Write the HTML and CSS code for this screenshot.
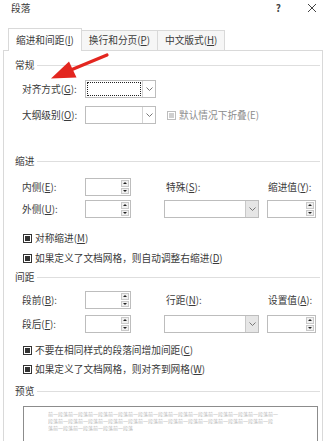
FILE: index.html
```html
<!DOCTYPE html>
<html lang="zh-CN">
<head>
<meta charset="utf-8">
<title>段落</title>
<link rel="stylesheet" href="styles.css">
</head>
<body>
<div class="titlebar">
  <span class="title">段落</span>
  <span class="help">?</span>
  <span class="close"><svg width="10" height="10" viewBox="0 0 10 10"><path d="M1 1L9 9M9 1L1 9" stroke="#444" stroke-width="1" fill="none"/></svg></span>
</div>
<div class="tabs">
  <div class="tab active">缩进和间距(<u>I</u>)</div>
  <div class="tab">换行和分页(<u>P</u>)</div>
  <div class="tab">中文版式(<u>H</u>)</div>
</div>
<div class="panel">
  <div class="group-head gh-general"><span>常规</span><i></i></div>
  <div class="row row-align">
    <span class="lbl">对齐方式(<u>G</u>):</span>
    <div class="combo combo-short focus"><span class="val"><span class="dots"></span></span><span class="btn"><svg width="7" height="4" viewBox="0 0 7 4"><path d="M0.5 0.5L3.5 3.5L6.5 0.5" stroke="#777" fill="none"/></svg></span></div>
  </div>
  <div class="row row-outline">
    <span class="lbl">大纲级别(<u>O</u>):</span>
    <div class="combo combo-short"><span class="val"></span><span class="btn"><svg width="7" height="4" viewBox="0 0 7 4"><path d="M0.5 0.5L3.5 3.5L6.5 0.5" stroke="#777" fill="none"/></svg></span></div>
    <span class="check disabled span2"><span class="cb"></span>默认情况下折叠(E)</span>
  </div>

  <div class="group-head gh-indent"><span>缩进</span><i></i></div>
  <div class="row row-first">
    <span class="lbl">内侧(<u>E</u>):</span>
    <div class="spin"><span class="field"></span><span class="arrows"><span class="up"></span><span class="down"></span></span></div>
    <span class="lbl2">特殊(<u>S</u>):</span>
    <span class="lbl2">缩进值(<u>Y</u>):</span>
  </div>
  <div class="row row-second">
    <span class="lbl">外侧(<u>U</u>):</span>
    <div class="spin"><span class="field"></span><span class="arrows"><span class="up"></span><span class="down"></span></span></div>
    <div class="combo combo-wide"><span class="val"></span><span class="btn shaded"><svg width="7" height="4" viewBox="0 0 7 4"><path d="M0.5 0.5L3.5 3.5L6.5 0.5" stroke="#777" fill="none"/></svg></span></div>
    <div class="spin spin-r"><span class="field"></span><span class="arrows"><span class="up"></span><span class="down"></span></span></div>
  </div>
  <div class="check check-a"><span class="cb"></span>对称缩进(<u>M</u>)</div>
  <div class="check check-b"><span class="cb"></span>如果定义了文档网格，则自动调整右缩进(<u>D</u>)</div>

  <div class="group-head gh-spacing"><span>间距</span><i></i></div>
  <div class="row row-first2">
    <span class="lbl">段前(<u>B</u>):</span>
    <div class="spin"><span class="field"></span><span class="arrows"><span class="up"></span><span class="down"></span></span></div>
    <span class="lbl2">行距(<u>N</u>):</span>
    <span class="lbl2">设置值(<u>A</u>):</span>
  </div>
  <div class="row row-second2">
    <span class="lbl">段后(<u>F</u>):</span>
    <div class="spin"><span class="field"></span><span class="arrows"><span class="up"></span><span class="down"></span></span></div>
    <div class="combo combo-wide"><span class="val"></span><span class="btn shaded"><svg width="7" height="4" viewBox="0 0 7 4"><path d="M0.5 0.5L3.5 3.5L6.5 0.5" stroke="#777" fill="none"/></svg></span></div>
    <div class="spin spin-r"><span class="field"></span><span class="arrows"><span class="up"></span><span class="down"></span></span></div>
  </div>
  <div class="check check-c"><span class="cb"></span>不要在相同样式的段落间增加间距(<u>C</u>)</div>
  <div class="check check-d"><span class="cb"></span>如果定义了文档网格，则对齐到网格(<u>W</u>)</div>

  <div class="group-head gh-preview"><span>预览</span><i></i></div>
  <div class="preview">
    <div class="pline">前一段落前一段落前一段落前一段落前一段落前一段落前一段落前一段落前一段落前一段落前一段落前一</div>
    <div class="pline">段落前一段落前一段落前一段落前一段落前一段落前一段落前一段落前一段落前一段落前一段落前一段</div>
    <div class="pline">落前一段落前一段落前一段落前一段落</div>
  </div>
</div>
<svg class="annot" width="329" height="441" viewBox="0 0 329 441">
  <path d="M107 55 L72 69.5" stroke="#e3261f" stroke-width="3.2" stroke-linecap="round" fill="none"/>
  <path d="M51 78.5 L69 61.5 L76.5 77.5 Z" fill="#e3261f"/>
</svg>
</body>
</html>
```

FILE: styles.css
```css
* { box-sizing: border-box; }
html, body { margin: 0; padding: 0; }
body {
  width: 329px;
  height: 441px;
  overflow: hidden;
  position: relative;
  background: #ffffff;
  color: #3a3a3a;
  font-family: "Noto Sans CJK SC", "Noto Sans", sans-serif;
  font-size: 9.7px;
  line-height: 14px;
}
u { text-decoration: underline; text-underline-offset: 1px; }

.titlebar {
  display: flex;
  align-items: center;
  height: 16px;
  padding: 0 12px 0 11px;
}
.title { flex: 1; }
.help { font-size: 10px; margin-right: 26px; font-weight: bold; color: #444; }
.close { display: flex; align-items: center; }

.tabs {
  display: flex;
  align-items: flex-end;
  height: 22px;
  margin-top: 12px;
  padding-left: 8px;
  position: relative;
  z-index: 1;
}
.tab {
  height: 20px;
  line-height: 19px;
  padding: 0 7px;
  border: 1px solid #d9d9d9;
  border-bottom: none;
  background: #f6f6f6;
  margin-right: -1px;
  white-space: nowrap;
}
.tab.active {
  height: 23px;
  line-height: 22px;
  background: #ffffff;
  margin-bottom: -1px;
  position: relative;
  z-index: 2;
}

.panel {
  margin-left: 3px;
  width: 320px;
  height: 400px;
  border: 1px solid #d9d9d9;
  padding: 7px 2px 0 11px;
  display: flex;
  flex-direction: column;
}

.group-head {
  display: flex;
  align-items: center;
  height: 14px;
}
.group-head i {
  flex: 1;
  height: 1px;
  background: #dedede;
  margin-left: 3px;
}

.row {
  display: grid;
  grid-template-columns: 63px 80px 102px 1fr;
  align-items: center;
  height: 18px;
  padding-left: 7px;
  white-space: nowrap;
}
.lbl2 { padding-left: 1px; }
.span2 { grid-column: 3 / span 2; }

.row-align { margin-top: 8px; }
.row-outline { margin-top: 8px; }
.gh-indent { margin-top: 30px; }
.row-first { margin-top: 10px; }
.row-second { margin-top: 4px; }
.check-a { margin-top: 13px; }
.check-b { margin-top: 6px; }
.gh-spacing { margin-top: 5px; }
.row-first2 { margin-top: 7px; }
.row-second2 { margin-top: 6px; }
.check-c { margin-top: 10px; }
.check-d { margin-top: 5px; }
.gh-preview { margin-top: 8px; }

.combo {
  display: flex;
  height: 18px;
  border: 1px solid #bdbdbd;
  background: #fff;
}
.combo-short { width: 71px; }
.combo-wide { width: 95px; margin-left: -1px; }
.combo .val { flex: 1; display: flex; padding: 1px; }
.combo.focus .dots { flex: 1; border: 1px dotted #222; }
.combo .btn {
  width: 13px;
  border-left: 1px solid #d4d4d4;
  display: flex;
  align-items: center;
  justify-content: center;
}
.combo .btn.shaded { background: #e6e6e6; border-left-color: #c8c8c8; }

.spin {
  display: flex;
  width: 46px;
  height: 18px;
  border: 1px solid #bdbdbd;
  background: #fff;
}
.spin-r { width: 49px; }
.spin .field { flex: 1; }
.spin .arrows {
  width: 9px;
  display: flex;
  flex-direction: column;
  padding: 1px 1px 1px 0;
  gap: 1px;
}
.spin .up, .spin .down {
  flex: 1;
  border: 1px solid #c9c9c9;
  background: #f0f0f0;
  position: relative;
}
.spin .up::after, .spin .down::after {
  content: "";
  position: absolute;
  left: 50%;
  top: 50%;
  margin-left: -2px;
  border-left: 2px solid transparent;
  border-right: 2px solid transparent;
}
.spin .up::after { margin-top: -1.5px; border-bottom: 2.5px solid #222; }
.spin .down::after { margin-top: -1px; border-top: 2.5px solid #222; }

.check {
  display: flex;
  align-items: center;
  height: 14px;
  padding-left: 8px;
  white-space: nowrap;
}
.row .check { padding-left: 2px; }
.cb {
  width: 9px;
  height: 9px;
  border: 1px solid #333;
  background: #fff;
  margin-right: 3px;
  display: flex;
  align-items: center;
  justify-content: center;
}
.cb::after {
  content: "";
  width: 5px;
  height: 5px;
  background: #333;
}
.check.disabled { color: #8c8c8c; }
.check.disabled .cb { border-color: #bdbdbd; }
.check.disabled .cb::after { background: #cfcfcf; }

.preview {
  margin-top: 8px;
  margin-left: 8px;
  width: 295px;
  flex: 1;
  border: 1px solid #8c8c8c;
  border-bottom: none;
  padding: 3px 0 0 24px;
  color: #b9b9b9;
  font-size: 5px;
  line-height: 7px;
}
.pline { white-space: nowrap; overflow: hidden; }

.annot {
  position: absolute;
  left: 0;
  top: 0;
  pointer-events: none;
}
```
